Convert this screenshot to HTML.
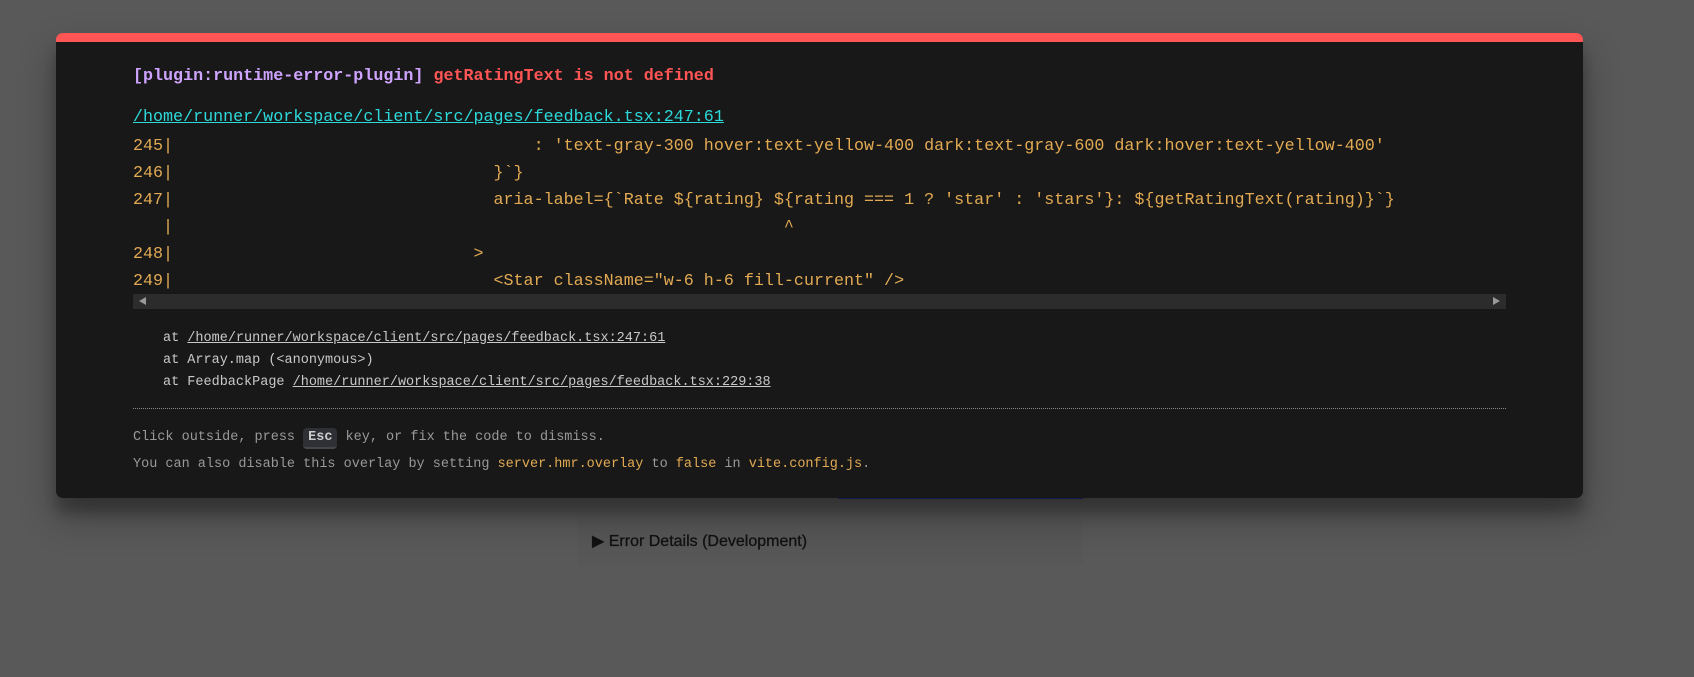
<!DOCTYPE html>
<html><head><meta charset="utf-8"><style>
html,body{margin:0;padding:0;width:1694px;height:677px;overflow:hidden;background:#595959;}
.p{position:absolute;left:56px;top:33px;width:1527px;height:465px;background:#181818;border-radius:7px;border-top:9px solid #ff5555;box-sizing:border-box;box-shadow:0 19px 38px rgba(0,0,0,0.3),0 15px 12px rgba(0,0,0,0.22);}
.m{font-family:"Liberation Mono",monospace;position:absolute;white-space:pre;}
.t{left:77px;top:25px;font-size:16.7px;font-weight:bold;}
.f{left:77px;top:66px;font-size:16.7px;color:#2dd9da;text-decoration:underline;}
.c{left:77px;top:91px;font-size:16.7px;line-height:27px;color:#e2aa53;}
.sb{position:absolute;left:77px;top:252px;width:1373px;height:15px;background:#2c2c2c;}
.s{left:107px;top:286px;font-size:13.5px;line-height:22px;color:#c9c9c9;}
.s u{text-decoration:underline;}
.hr{position:absolute;left:77px;top:366px;width:1373px;border-top:1px dotted #888;}
.tip{left:77px;top:382px;font-size:13.5px;line-height:27px;color:#999;}
.y{color:#e2aa53}
kbd{font-family:"Liberation Mono",monospace;background:#2e3035;color:#ccc;border-radius:4px;padding:2px 5px;border-bottom:2px solid #44464c;font-weight:bold;}
</style></head><body>
<div style="position:absolute;left:838px;top:496px;width:245px;height:3px;background:#1f2f80"></div>
<div style="position:absolute;left:578px;top:519px;width:505px;height:46px;background:#575757"></div>
<div style="position:absolute;left:592px;top:531px;font-family:'Liberation Sans',sans-serif;font-size:16px;color:#111;-webkit-text-stroke:0.3px #111">▶ Error Details (Development)</div>
<div class="p">
<div class="m t"><span style="color:#cfa4ff">[plugin:runtime-error-plugin]</span> <span style="color:#ff5555">getRatingText is not defined</span></div>
<div class="m f">/home/runner/workspace/client/src/pages/feedback.tsx:247:61</div>
<div class="m c">245|                                    : 'text-gray-300 hover:text-yellow-400 dark:text-gray-600 dark:hover:text-yellow-400'
246|                                }`}
247|                                aria-label={`Rate ${rating} ${rating === 1 ? 'star' : 'stars'}: ${getRatingText(rating)}`}
   |                                                             ^
248|                              &gt;
249|                                &lt;Star className="w-6 h-6 fill-current" /&gt;</div>
<div class="sb"><div style="position:absolute;left:6px;top:3px;width:0;height:0;border-top:4.5px solid transparent;border-bottom:4.5px solid transparent;border-right:7px solid #999"></div><div style="position:absolute;right:6px;top:3px;width:0;height:0;border-top:4.5px solid transparent;border-bottom:4.5px solid transparent;border-left:7px solid #999"></div></div>
<div class="m s">at <u>/home/runner/workspace/client/src/pages/feedback.tsx:247:61</u>
at Array.map (&lt;anonymous&gt;)
at FeedbackPage <u>/home/runner/workspace/client/src/pages/feedback.tsx:229:38</u></div>
<div class="hr"></div>
<div class="m tip">Click outside, press <kbd>Esc</kbd> key, or fix the code to dismiss.
You can also disable this overlay by setting <span class="y">server.hmr.overlay</span> to <span class="y">false</span> in <span class="y">vite.config.js</span>.</div>
</div>
</body></html>
